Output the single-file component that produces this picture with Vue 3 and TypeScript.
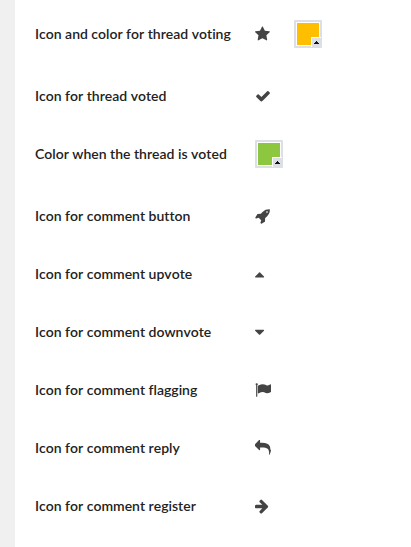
<script setup lang="ts">
interface Glyph {
  x: number
  d: string
}

interface Setting {
  id: string
  label: string
  icon?: string
  color?: string
}

const glyphs: Record<string, Glyph> = {
  star: {
    x: 64,
    d: 'M1728 647q0 22-26 48l-363 354 86 500q1 7 1 20 0 21-10.500 35.500t-30.500 14.500q-19 0-40-12l-449-236-449 236q-22 12-40 12-21 0-31.500-14.500t-10.500-35.500q0-6 2-20l86-500-364-354q-25-27-25-48 0-37 56-46l502-73 225-455q19-41 49-41t49 41l225 455 502 73q56 9 56 46z',
  },
  check: {
    x: 0,
    d: 'M1671 566q0 40-28 68l-724 724-136 136q-28 28-68 28t-68-28l-136-136-362-362q-28-28-28-68t28-68l136-136q28-28 68-28t68 28l294 295 656-657q28-28 68-28t68 28l136 136q28 28 28 68z',
  },
  rocket: {
    x: 0,
    d: 'M1440 448q0-40-28-68t-68-28-68 28-28 68 28 68 68 28 68-28 28-68zm224-288q0 249-75.500 430.500t-253.500 360.500q-81 80-195 176l-20 379q-2 16-16 26l-384 224q-7 4-16 4-12 0-23-9l-64-64q-13-14-8-32l85-276-281-281-276 85q-3 1-9 1-14 0-23-9l-64-64q-17-19-5-39l224-384q10-14 26-16l379-20q96-114 176-195 188-187 358-258t431-71q14 0 24 9.500t10 22.500z',
  },
  'caret-up': {
    x: 384,
    d: 'M1408 1216q0 26-19 45t-45 19h-896q-26 0-45-19t-19-45 19-45l448-448q19-19 45-19t45 19l448 448q19 19 19 45z',
  },
  'caret-down': {
    x: 384,
    d: 'M1408 704q0 26-19 45l-448 448q-19 19-45 19t-45-19l-448-448q-19-19-19-45t19-45 45-19h896q26 0 45 19t19 45z',
  },
  flag: {
    x: 0,
    d: 'M320 256q0 72-64 110v1266q0 13-9.500 22.500t-22.500 9.500h-64q-13 0-22.500-9.500t-9.500-22.500v-1266q-64-38-64-110 0-53 37.500-90.500t90.500-37.500 90.500 37.500 37.500 90.500zm1472 64v763q0 25-12.500 38.500t-39.500 27.500q-215 116-369 116-61 0-123.500-22t-108.500-48-115.500-48-142.500-22q-192 0-464 146-17 9-33 9-26 0-45-19t-19-45v-742q0-32 31-55 21-14 79-43 236-120 421-120 107 0 200 29t219 88q38 19 88 19 54 0 117.500-21t110-47 88-47 54.500-21q26 0 45 19t19 45z',
  },
  reply: {
    x: 0,
    d: 'M1792 1120q0 166-127 451-3 7-10.500 24t-13.500 30-13 22q-12 17-28 17-15 0-23.500-10t-8.500-25q0-9 2.500-26.500t2.500-23.500q5-68 5-123 0-112-19.500-200.500t-54-153.500-89-112-115-79-147-50.500-167.500-26.500-194.500-8h-224v256q0 26-19 45t-45 19-45-19l-512-512q-19-19-19-45t19-45l512-512q19-19 45-19t45 19 19 45v256h224q713 0 875 403 53 134 53 333z',
  },
  'arrow-right': {
    x: 128,
    d: 'M1600 960q0 54-37 91l-651 651q-39 37-91 37-51 0-90-37l-75-75q-38-38-38-91t38-91l293-293h-704q-52 0-84.500-37.500t-32.500-90.500v-128q0-53 32.500-90.500t84.500-37.500h704l-293-294q-38-36-38-90t38-90l75-75q38-38 90-38 53 0 91 38l651 651q37 35 37 90z',
  },
}

const settings: Setting[] = [
  { id: 'thread-voting', label: 'Icon and color for thread voting', icon: 'star', color: '#ffbf00' },
  { id: 'thread-voted', label: 'Icon for thread voted', icon: 'check' },
  { id: 'thread-voted-color', label: 'Color when the thread is voted', color: '#8dc73f' },
  { id: 'comment-button', label: 'Icon for comment button', icon: 'rocket' },
  { id: 'comment-upvote', label: 'Icon for comment upvote', icon: 'caret-up' },
  { id: 'comment-downvote', label: 'Icon for comment downvote', icon: 'caret-down' },
  { id: 'comment-flagging', label: 'Icon for comment flagging', icon: 'flag' },
  { id: 'comment-reply', label: 'Icon for comment reply', icon: 'reply' },
  { id: 'comment-register', label: 'Icon for comment register', icon: 'arrow-right' },
]
</script>

<template>
  <main class="panel">
    <div v-for="s in settings" :key="s.id" class="row" :class="{ 'has-color': s.color }">
      <label class="name" :for="s.id">{{ s.label }}</label>
      <div class="controls">
        <button v-if="s.icon" :id="s.id" type="button" class="icon">
          <svg :viewBox="`${glyphs[s.icon].x} 0 1792 1792`" aria-hidden="true">
            <path :d="glyphs[s.icon].d" />
          </svg>
        </button>
        <button
          v-if="s.color"
          :id="s.icon ? `${s.id}-color` : s.id"
          type="button"
          class="swatch"
          :aria-label="s.label"
        >
          <span class="fill" :style="{ backgroundColor: s.color }"></span>
          <span class="corner">
            <svg viewBox="0 0 5 3" aria-hidden="true"><path d="M2 0h1v1h1v1h1v1H0V2h1V1h1z" /></svg>
          </span>
        </button>
      </div>
    </div>
  </main>
</template>

<style>
body {
  background: #fff;
}
</style>

<style scoped>
.panel {
  box-sizing: border-box;
  min-height: 100vh;
  padding: 5px 20px 12px;
  border-left: 15px solid #f0f0f0;
  font-family: Lato, 'Open Sans', sans-serif;
  font-size: 14px;
  line-height: 20px;
  color: #222;
}

.row {
  display: grid;
  grid-template-columns: 220px 1fr;
  align-items: center;
  min-height: 58px;
}

.row.has-color {
  padding-bottom: 4px;
}

.name {
  font-weight: 600;
  font-kerning: none;
  font-variant-ligatures: none;
  white-space: nowrap;
}

.controls {
  display: flex;
  align-items: center;
  gap: 23px;
}

button {
  display: block;
  margin: 0;
  padding: 0;
  border: 0;
  background: none;
  cursor: pointer;
}

.icon {
  width: 16px;
  height: 16px;
}

.icon svg {
  display: block;
  width: 16px;
  height: 16px;
  fill: #444;
}

.swatch {
  position: relative;
  box-sizing: border-box;
  width: 28px;
  height: 28px;
  padding: 1px;
  border: 2px solid #dcdfe6;
  border-radius: 1px;
  background: #fff;
}

.fill {
  display: block;
  height: 22px;
}

.corner {
  position: absolute;
  right: -1px;
  bottom: -1px;
  display: flex;
  align-items: center;
  justify-content: center;
  width: 9px;
  height: 9px;
  border-top: 1px solid #fff;
  border-left: 1px solid #fff;
  background: #dcdfe6;
}

.corner svg {
  width: 5px;
  height: 3px;
  fill: #111;
}
</style>
